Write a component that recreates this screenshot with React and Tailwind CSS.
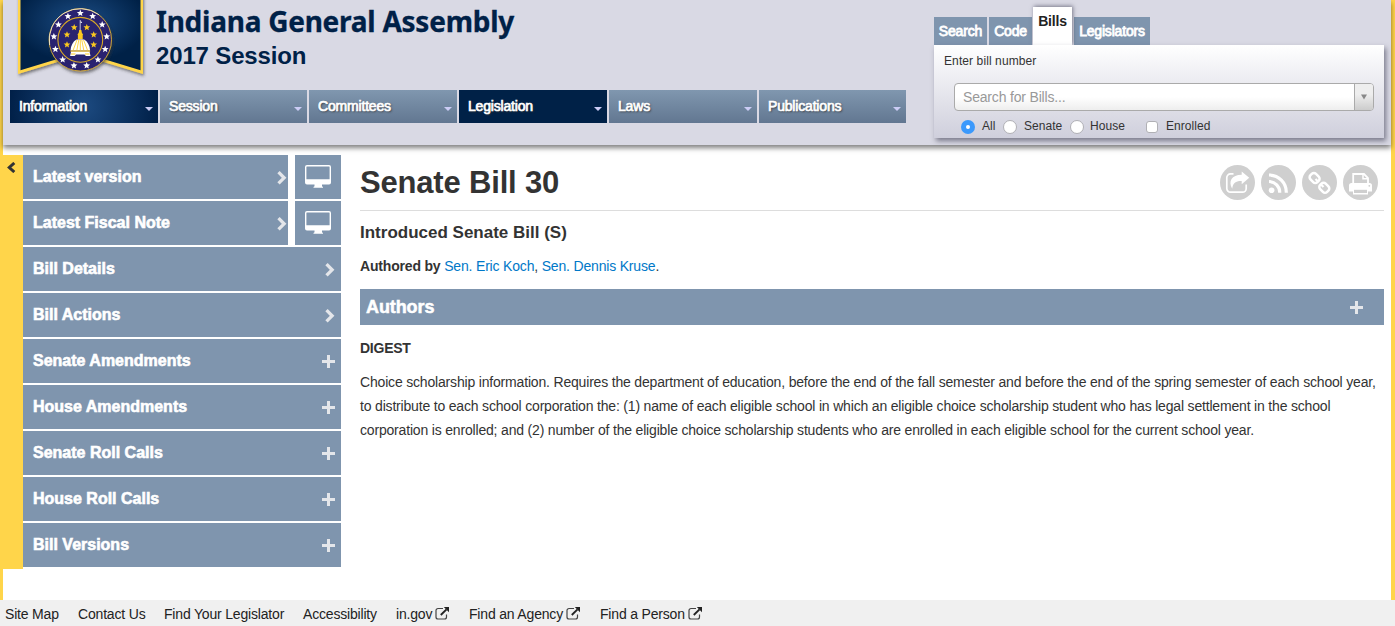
import React from 'react';

const NAV = [
  { label: 'Information', cls: 'w-[148px] bg-[radial-gradient(circle_at_center,#1c4a80_0%,#001f47_100%)]' },
  { label: 'Session', cls: 'w-[147px] bg-linear-to-b from-[#8097af] to-[#627791]' },
  { label: 'Committees', cls: 'w-[148px] bg-linear-to-b from-[#8097af] to-[#627791]' },
  { label: 'Legislation', cls: 'w-[148px] bg-[#002147]' },
  { label: 'Laws', cls: 'w-[148px] bg-linear-to-b from-[#8097af] to-[#627791]' },
  { label: 'Publications', cls: 'w-[147px] bg-linear-to-b from-[#8097af] to-[#627791]' },
];

const TABS = [
  { label: 'Search', cls: 'w-[53px]' },
  { label: 'Code', cls: 'ml-[2px] w-[43px]' },
  { label: 'Bills', cls: 'ml-[1px] w-[39px]', active: true },
  { label: 'Legislators', cls: 'ml-[2px] w-[76px]' },
];

const SIDE = [
  { label: 'Latest version', screen: true },
  { label: 'Latest Fiscal Note', screen: true },
  { label: 'Bill Details', chevron: true },
  { label: 'Bill Actions', chevron: true },
  { label: 'Senate Amendments' },
  { label: 'House Amendments' },
  { label: 'Senate Roll Calls' },
  { label: 'House Roll Calls' },
  { label: 'Bill Versions' },
];

const FOOTER = [
  { label: 'Site Map', cls: 'w-[73px]' },
  { label: 'Contact Us', cls: 'w-[86px]' },
  { label: 'Find Your Legislator', cls: 'w-[139px]' },
  { label: 'Accessibility', cls: 'w-[93px]' },
  { label: 'in.gov', cls: 'w-[73px]', ext: true },
  { label: 'Find an Agency', cls: 'w-[131px]', ext: true },
  { label: 'Find a Person', cls: 'w-[110px]', ext: true },
];

function starPoints(cx, cy, r) {
  const pts = [];
  for (let i = 0; i < 10; i++) {
    const rad = i % 2 ? r * 0.45 : r;
    const a = -Math.PI / 2 + (i * Math.PI) / 5;
    pts.push(`${(cx + rad * Math.cos(a)).toFixed(2)},${(cy + rad * Math.sin(a)).toFixed(2)}`);
  }
  return pts.join(' ');
}

function Ribbon() {
  const cx = 65.3;
  const cy = 39.8;
  const outer = Array.from({ length: 13 }, (_, i) => {
    const a = -Math.PI / 2 + (i * 2 * Math.PI) / 13;
    return [cx + 26.6 * Math.cos(a), cy + 26.6 * Math.sin(a)];
  });
  const inner = [[59.2, 27.4], [52, 34.7], [52, 44.7], [71.8, 27.4], [78.7, 34.7], [78.7, 44.7]];
  return (
    <svg width="132" height="84" viewBox="0 0 132 84" className="block">
      <defs>
        <radialGradient id="navy" cx="50%" cy="35%" r="55%">
          <stop offset="0" stopColor="#1c4d85" />
          <stop offset="1" stopColor="#002147" />
        </radialGradient>
        <filter id="soft" x="-20%" y="-20%" width="140%" height="150%">
          <feDropShadow dx="1" dy="2" stdDeviation="1.6" floodColor="#333" floodOpacity="0.6" />
        </filter>
      </defs>
      <path d="M3 -5H128V74L65.5 55L3 74Z" fill="#ffd54a" filter="url(#soft)" />
      <path d="M5.500 -5H125.500V70.300L65.500 52L5.500 70.300Z" fill="url(#navy)" />
      <circle cx={cx} cy={cy} r="31.2" fill="#29246f" stroke="#c9a23a" strokeWidth="1" filter="url(#soft)" />
      <path d="M34.600 45A31.200 31.200 0 0 1 84 14.800" fill="none" stroke="#e9dfc0" strokeWidth="1" />
      <circle cx={cx} cy={cy} r="22.4" fill="#29246f" stroke="#d9aa25" strokeWidth="1.1" />
      {outer.map(([x, y], i) => <polygon key={i} points={starPoints(x, y, 3.6)} fill="#fff" />)}
      {inner.map(([x, y], i) => <polygon key={i} points={starPoints(x, y, 3.5)} fill="#fbc91f" />)}
      <path d="M65.2 20V31" stroke="#fff" strokeWidth="0.7" />
      <path d="M65.6 20.500l1.600 2.600h-1.600Z" fill="#fff" />
      <path d="M64.2 30h2.200l.4 2.500 1.400 2.500h-.5v4.500h-4.800v-4.500h-.5l1.400-2.500Z" fill="#fbc91f" />
      <path d="M61.500 39.500h7.600c3.600 2 5.700 6 6 11h-19.600c.3-5 2.400-9 6-11Z" fill="#fff" />
      <path d="M62 40l-4 10.500M63.800 40l-2 10.500M65.300 40v10.500M66.800 40l2 10.500M68.600 40l4 10.500" stroke="#fbc91f" strokeWidth="0.8" />
      <path d="M55.500 50.500h19.600v1.300h-19.600Z" fill="#fbc91f" />
      <path d="M56 51.800h18.600l.9 4.200h-4.500l-1.500-1.500h-8.400l-1.500 1.500h-4.500Z" fill="#fff" />
      <path d="M56 54h4.500M70 54h4.500" stroke="#fbc91f" strokeWidth="1" />
    </svg>
  );
}

function Monitor() {
  return (
    <svg width="26" height="23" viewBox="0 0 26 23" className="block">
      <path fillRule="evenodd" fill="#fff" d="M2 0H24A2 2 0 0 1 26 2V17.500A2 2 0 0 1 24 19.500H17V21.200L18 22V22.800H8.500V22L9.500 21.200V19.500H2A2 2 0 0 1 0 17.500V2A2 2 0 0 1 2 0ZM1.400 1.900V14.200H24.600V1.900A.5.5 0 0 0 24.100 1.400H1.900A.5.5 0 0 0 1.400 1.900Z" />
    </svg>
  );
}

function Chevron() {
  return (
    <svg width="10" height="14" viewBox="0 0 10 14" className="block">
      <path d="M1.500 1.200L7.100 6.800L1.500 12.400" fill="none" stroke="#e4e6ea" strokeWidth="3.300" />
    </svg>
  );
}

function Plus() {
  return (
    <svg width="13" height="13" viewBox="0 0 13 13" className="block">
      <path d="M5 0h3v5h5v3H8v5H5V8H0V5h5Z" fill="#e4e6ea" />
    </svg>
  );
}

function External() {
  return (
    <svg width="15" height="13" viewBox="0 0 15 13" className="block">
      <path d="M8 1.500H3A2 2 0 0 0 1 3.500V10A2 2 0 0 0 3 12H9.500A2 2 0 0 0 11.500 10V7.500" fill="none" stroke="#444" strokeWidth="1.200" />
      <path d="M5.800 8L11.500 2.300" stroke="#222" strokeWidth="1.900" />
      <path d="M8.800 0H14V5.200Z" fill="#222" />
    </svg>
  );
}

function Disc({ children }) {
  return (
    <svg width="35" height="35" viewBox="0 0 35 35" className="block">
      <circle cx="17.5" cy="17.5" r="17.5" fill="#cfcfcf" />
      {children}
    </svg>
  );
}

function Actions() {
  return (
    <div className="flex gap-[6px]">
      <Disc>
        <path d="M13.500 8.900H10.500A3.700 3.700 0 0 0 6.800 12.600V23.500A3.700 3.700 0 0 0 10.500 27.200H22.500A3.700 3.700 0 0 0 26.200 23.500V19.500" fill="none" stroke="#fff" strokeWidth="1.700" />
        <path d="M21.700 6.500L29.200 12.800L21.700 19.300V16C16 15.800 13 17.500 12.200 23.800C8 16.500 11.500 10 21.700 9.800Z" fill="#fff" />
      </Disc>
      <Disc>
        <circle cx="10.6" cy="25.2" r="2.8" fill="#fff" />
        <path d="M8 16.500A10.800 10.800 0 0 1 18.700 27.700M8 10A17.300 17.300 0 0 1 25.300 27.700" fill="none" stroke="#fff" strokeWidth="3.200" />
      </Disc>
      <Disc>
        <g fill="none" stroke="#fff" strokeWidth="2.500">
          <rect x="-4.9" y="-3.9" width="9.8" height="7.8" rx="3" transform="translate(12.600 13) rotate(45)" />
          <rect x="-4.9" y="-3.9" width="9.8" height="7.8" rx="3" transform="translate(22.300 22.800) rotate(45)" />
          <path d="M13.500 14L16 16.500M19 19.500L21.500 22" strokeWidth="2.200" />
        </g>
      </Disc>
      <Disc>
        <path d="M10.200 18V9H21L25 13V18" fill="none" stroke="#fff" strokeWidth="1.800" />
        <path d="M20 9V13.800H25" fill="none" stroke="#fff" strokeWidth="1.500" />
        <path d="M8.500 18H26.500A2.500 2.500 0 0 1 29 20.500V26.500H25V29.500H10V26.500H6V20.500A2.500 2.500 0 0 1 8.500 18Z" fill="#fff" />
        <path d="M11 24.800H24V28H11Z" fill="#cfcfcf" />
        <circle cx="26.3" cy="20.8" r="0.9" fill="#cfcfcf" />
      </Disc>
    </div>
  );
}

function Radio({ on }) {
  return on ? (
    <span className="flex size-[14px] items-center justify-center rounded-full bg-[#3b99fc]">
      <span className="size-[4px] rounded-full bg-white" />
    </span>
  ) : (
    <span className="size-[14px] rounded-full border border-[#b0b0b5] bg-white" />
  );
}

function SearchPanel() {
  return (
    <div className="mt-[7px] w-[450px] shrink-0">
      <div className="flex h-[38px] items-end">
        {TABS.map((t) => (
          <div
            key={t.label}
            className={`flex justify-center text-[14px] leading-[16px] whitespace-nowrap ${t.cls} ${
              t.active
                ? 'relative h-[38px] bg-white pt-[6px] font-bold tracking-[-0.2px] text-[#222] shadow-[1px_-1px_4px_rgba(60,60,80,0.6)]'
                : 'h-[28px] bg-[#7f95ae] pt-[6px] tracking-[-0.18px] text-white [-webkit-text-stroke:0.8px_white]'
            }`}
          >
            {t.label}
          </div>
        ))}
      </div>
      <div className="relative h-[93px] bg-linear-to-b from-white to-[#cfcfdc] px-[10px] text-[12px] text-[#333] shadow-[2px_3px_5px_rgba(70,70,90,0.65)]">
        <div className="pt-[8px] leading-[16px] tracking-[0.1px]">Enter bill number</div>
        <div className="mt-[14px] ml-[10px] flex h-[28px] w-[420px] overflow-hidden rounded-[4px] border border-[#aaa] bg-linear-to-t from-[#eee] to-white to-50%">
          <div className="flex-1 pl-[8px] text-[14px] leading-[26px] tracking-[-0.18px] text-[#999]">Search for Bills...</div>
          <div className="flex w-[19px] items-center justify-center border-l border-[#aaa] bg-linear-to-t from-[#ccc] to-[#eee] to-60%">
            <svg width="6" height="6" viewBox="0 0 6 6"><path d="M0 .5H6L3 5.500Z" fill="#888" /></svg>
          </div>
        </div>
        <div className="mt-[7px] ml-[17px] flex h-[18px] items-center leading-[16px] tracking-[0.05px]">
          <Radio on />
          <span className="-mt-[2px] ml-[7px] w-[21px]">All</span>
          <Radio />
          <span className="-mt-[2px] ml-[7px] w-[46px]">Senate</span>
          <Radio />
          <span className="-mt-[2px] ml-[6px] w-[56px]">House</span>
          <span className="-mt-[1px] size-[12px] rounded-[3px] border border-[#b0b0b5] bg-white" />
          <span className="-mt-[2px] ml-[8px]">Enrolled</span>
        </div>
      </div>
    </div>
  );
}

function Header() {
  return (
    <header className="relative flex h-[145px] bg-[#d9d9e4] shadow-[0_3px_5px_rgba(0,0,0,0.5)]">
      <div className="w-[931px] shrink-0">
        <div className="flex h-[90px]">
          <div className="ml-[12px] w-[132px]"><Ribbon /></div>
          <div className="ml-[9px] text-[#002147]">
            <h1 className="pt-[3px] font-['Noto_Sans'] text-[28px] leading-[36px] font-bold tracking-[-0.25px] whitespace-nowrap [-webkit-text-stroke:0.3px_#002147]">Indiana General Assembly</h1>
            <h2 className="pt-[2px] text-[24px] leading-[30px] font-bold tracking-[-0.15px]">2017 Session</h2>
          </div>
        </div>
        <nav className="ml-[7px] flex gap-[2px]">
          {NAV.map((n) => (
            <div key={n.label} className={`flex h-[33px] justify-between pr-[5px] pl-[9px] text-[14px] leading-[33px] tracking-[-0.18px] text-white [-webkit-text-stroke:0.7px_white] [text-shadow:1px_1px_2px_#333] ${n.cls}`}>
              {n.label}
              <svg width="8" height="4" viewBox="0 0 8 4" className="mt-[17px]"><path d="M0 0H8L4 4Z" fill="#ccccf5" /></svg>
            </div>
          ))}
        </nav>
      </div>
      <SearchPanel />
    </header>
  );
}

function Sidebar() {
  return (
    <aside className="flex h-[414px] w-[341px] shrink-0">
      <div className="w-[23px] bg-[#ffd54a] pt-[7px] pl-[7px]">
        <svg width="9" height="11" viewBox="0 0 9 11"><path d="M7.300 1L2.300 5.500L7.300 10" fill="none" stroke="#333" strokeWidth="3" /></svg>
      </div>
      <div className="flex flex-1 flex-col gap-[2px] text-[16px] leading-[43px] font-bold text-white">
        {SIDE.map((s) => (
          <div key={s.label} className="flex h-[44px] gap-[7px]">
            <div className="flex flex-1 justify-between bg-[#7f95ae] pl-[10px] [-webkit-text-stroke:0.6px_white]">
              <span>{s.label}</span>
              <span className={s.screen ? 'mt-[16px] mr-[1px]' : 'mt-[16px] mr-[6px]'}>
                {s.screen || s.chevron ? <Chevron /> : <Plus />}
              </span>
            </div>
            {s.screen && (
              <div className="w-[46px] bg-[#7f95ae] pt-[10px] pl-[10px]"><Monitor /></div>
            )}
          </div>
        ))}
      </div>
    </aside>
  );
}

function Bill() {
  return (
    <main className="ml-[19px] w-[1024px] text-[14px] tracking-[-0.18px] text-[#333]">
      <div className="flex h-[56px] justify-between border-b border-[#ddd] pt-[10px] pr-[6px]">
        <h1 className="text-[31px] leading-[35px] font-bold tracking-[-0.18px]">Senate Bill 30</h1>
        <Actions />
      </div>
      <h3 className="mt-[11px] text-[17px] leading-[21px] font-bold tracking-normal">Introduced Senate Bill (S)</h3>
      <p className="mt-[13px] leading-[20px] whitespace-nowrap">
        <b>Authored by</b> <a className="text-[#0078c8]">Sen. Eric Koch</a>, <a className="text-[#0078c8]">Sen. Dennis Kruse</a>.
      </p>
      <div className="mt-[13px] flex h-[36px] justify-between bg-[#7f95ae] pr-[21px] pl-[6px] text-[18px] leading-[36px] font-bold tracking-[-0.1px] text-white [-webkit-text-stroke:0.5px_white]">
        Authors
        <span className="mt-[12px]"><Plus /></span>
      </div>
      <h4 className="mt-[13px] text-[14px] leading-[20px] font-bold tracking-[-0.25px]">DIGEST</h4>
      <p className="mt-[12px] leading-[24px] whitespace-nowrap">
        Choice scholarship information. Requires the department of education, before the end of the fall semester and before the end of the spring semester of each school year,<br />
        to distribute to each school corporation the: (1) name of each eligible school in which an eligible choice scholarship student who has legal settlement in the school<br />
        corporation is enrolled; and (2) number of the eligible choice scholarship students who are enrolled in each eligible school for the current school year.
      </p>
    </main>
  );
}

export default function App() {
  return (
    <div className="h-[626px] w-[1395px] overflow-hidden bg-white font-['Liberation_Sans',Arial,sans-serif]">
      <div className="h-[600px] border-r-4 border-l-[3px] border-[#ffd54a]">
        <Header />
        <div className="relative mt-[10px] -ml-[3px] flex">
          <Sidebar />
          <Bill />
        </div>
      </div>
      <footer className="flex h-[26px] bg-[#f0f0f0] pl-[5px] text-[14px] leading-[28px] tracking-[-0.18px] text-[#222]">
        {FOOTER.map((f) => (
          <div key={f.label} className={`flex gap-[3px] whitespace-nowrap ${f.cls}`}>
            {f.label}
            {f.ext && <span className="mt-[7px]"><External /></span>}
          </div>
        ))}
      </footer>
    </div>
  );
}
